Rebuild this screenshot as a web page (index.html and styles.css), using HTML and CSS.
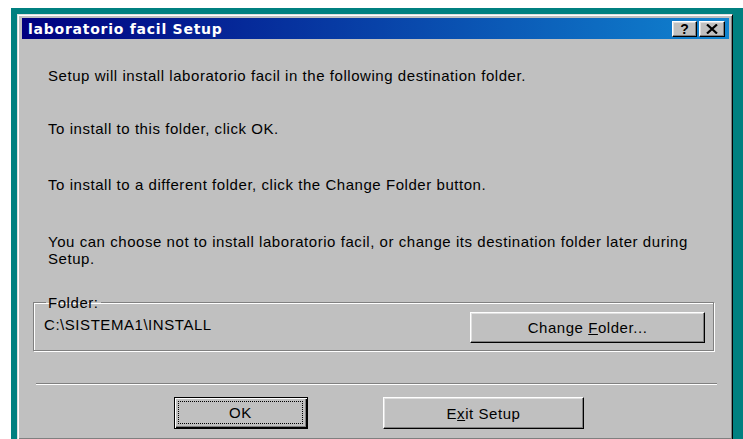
FILE: index.html
```html
<!DOCTYPE html>
<html>
<head>
<meta charset="utf-8">
<title>laboratorio facil Setup</title>
<link rel="stylesheet" href="styles.css">
</head>
<body>
<div class="desktop">
  <div class="window">
    <div class="titlebar">
      <span class="title">laboratorio facil Setup</span>
      <div class="caption-buttons">
        <button class="cap-btn help">?</button>
        <button class="cap-btn close">
          <svg width="12" height="10" viewBox="0 0 12 10"><path d="M1 0.5 L11 9.5 M11 0.5 L1 9.5" stroke="#000" stroke-width="2.2" fill="none"/></svg>
        </button>
      </div>
    </div>
    <div class="content">
      <p class="msg m1">Setup will install laboratorio facil in the following destination folder.</p>
      <p class="msg m2">To install to this folder, click OK.</p>
      <p class="msg m3">To install to a different folder, click the Change Folder button.</p>
      <p class="msg m4">You can choose not to install laboratorio facil, or change its destination folder later during Setup.</p>
      <fieldset class="group">
        <legend>Folder:</legend>
        <div class="group-row">
          <span class="path">C:\SISTEMA1\INSTALL</span>
          <button class="btn change">Change <u>F</u>older...</button>
        </div>
      </fieldset>
      <div class="separator"></div>
      <div class="actions">
        <button class="btn default"><span class="focus">OK</span></button>
        <button class="btn exit">E<u>x</u>it Setup</button>
      </div>
    </div>
  </div>
</div>
</body>
</html>
```
FILE: styles.css
```css
html, body {
  margin: 0;
  background: #fff;
  overflow: hidden;
}

.desktop {
  margin: 8px 0 0 11px;
  height: 431px;
  padding: 6px 10px 0 6px;
  box-sizing: border-box;
  background: #008080;
}

.window {
  width: 716px;
  height: 426px;
  box-sizing: border-box;
  background: #c0c0c0;
  border: 1px solid;
  border-color: #dfdfdf #000 #000 #dfdfdf;
  box-shadow: inset 1px 1px #fff, inset -1px -1px #808080;
  padding: 3px 3px 0 4px;
  font-family: "Liberation Sans", Arial, sans-serif;
  font-size: 15px;
  letter-spacing: 0.55px;
  color: #000;
}

.titlebar {
  height: 21px;
  display: flex;
  align-items: center;
  justify-content: space-between;
  background: linear-gradient(to right, #000080, #1084d0);
  padding: 0 4px 0 6px;
}

.title {
  color: #fff;
  font-family: "DejaVu Sans", Verdana, sans-serif;
  font-weight: bold;
  font-size: 14px;
  letter-spacing: 0.75px;
}

.caption-buttons {
  display: flex;
  gap: 2px;
}

.cap-btn {
  width: 25px;
  height: 16px;
  padding: 0;
  margin: 0;
  display: flex;
  align-items: center;
  justify-content: center;
  background: #c0c0c0;
  border: 1px solid;
  border-color: #fff #000 #000 #fff;
  box-shadow: inset -1px -1px #808080, inset 1px 1px #dfdfdf;
  font-family: "Liberation Sans", Arial, sans-serif;
  font-weight: bold;
  font-size: 14px;
  line-height: 1;
  color: #000;
}

.cap-btn.close {
  width: 26px;
}

.msg {
  margin: 0;
  padding: 0 18px 0 26px;
  line-height: 17px;
}

.m1 { margin-top: 28px; }
.m2 { margin-top: 36px; }
.m3 { margin-top: 39px; }
.m4 { margin-top: 40px; }

.group {
  margin: 28px 0 0 11px;
  width: 681px;
  height: 56px;
  box-sizing: border-box;
  padding: 0 8px 0 11px;
  border: 1px solid #808080;
  box-shadow: inset 1px 1px #fff, 1px 1px #fff;
}

.group legend {
  padding: 0 2px;
  margin-left: 1px;
  line-height: 15px;
}

.group-row {
  display: flex;
  align-items: center;
  justify-content: space-between;
  margin-top: 2px;
}

.path {
  margin: -6px 0 0 -1px;
}

.btn {
  font-family: "Liberation Sans", Arial, sans-serif;
  font-size: 15px;
  letter-spacing: 0.55px;
  color: #000;
  background: #c0c0c0;
  border: 1px solid;
  border-color: #fff #000 #000 #fff;
  box-shadow: inset -1px -1px #808080, inset 1px 1px #dfdfdf;
  padding: 0;
  margin: 0;
  box-sizing: border-box;
}

.change {
  width: 235px;
  height: 31px;
}

.separator {
  margin: 32px 0 0 14px;
  width: 681px;
  height: 1px;
  background: #808080;
  box-shadow: 0 1px #fff;
}

.actions {
  display: flex;
  gap: 75px;
  margin: 13px 0 0 152px;
}

.default {
  width: 134px;
  height: 32px;
  border: 1px solid #000;
  box-shadow: inset 1px 1px #fff, inset -1px -1px #000, inset -2px -2px #808080;
  padding: 3px 4px 4px 3px;
}

.focus {
  display: flex;
  align-items: center;
  justify-content: center;
  height: 100%;
  border: 1px dotted #000;
  box-sizing: border-box;
}

.exit {
  width: 201px;
  height: 32px;
}
```
